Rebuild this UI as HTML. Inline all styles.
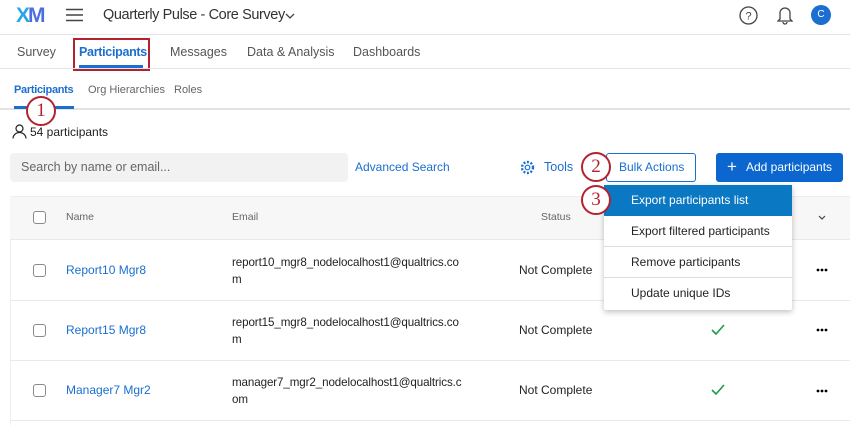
<!DOCTYPE html>
<html><head><meta charset="utf-8"><style>
*{margin:0;padding:0;box-sizing:border-box}
body{width:850px;height:425px;overflow:hidden;background:#fff;font-family:"Liberation Sans",sans-serif;color:#222;position:relative}
.a{position:absolute;white-space:nowrap}
.blue{color:#1a6fd1}
.cb{position:absolute;width:13px;height:13px;border:1.3px solid #8a8a8a;border-radius:3px;background:#fff}
.circ{position:absolute;width:30px;height:30px;border:2.5px solid #b3232f;border-radius:50%;background:#fff;color:#b3232f;font-size:19px;text-align:center;line-height:25px;font-family:"Liberation Serif",serif}
.mi{position:absolute;left:0;width:188px;height:31px;font-size:12px;padding-left:27px;line-height:31px;border-top:1px solid #ddd}
.em{font-size:11.6px;line-height:17px;letter-spacing:-0.1px}
</style></head><body>
<div class="a" style="left:16px;top:4px;font-size:21px;font-weight:bold;letter-spacing:-2px;color:#2aa6e8">X<span style="color:#4c6fe0">M</span></div>
<svg class="a" style="left:66px;top:8px" width="17" height="14"><path d="M0 1.5H17M0 7H17M0 12.5H17" stroke="#444" stroke-width="1.6"/></svg>
<div class="a" style="left:103px;top:7px;font-size:14.5px;color:#333;letter-spacing:-0.4px">Quarterly Pulse - Core Survey</div>
<svg class="a" style="left:285px;top:13px" width="10" height="7"><path d="M1 1L5 5L9 1" stroke="#444" fill="none" stroke-width="1.3"/></svg>
<svg class="a" style="left:739px;top:6px" width="19" height="19"><circle cx="9.5" cy="9.5" r="8.5" stroke="#444" fill="none" stroke-width="1.3"/><text x="9.5" y="13.5" font-size="11" text-anchor="middle" fill="#444" font-family="Liberation Sans">?</text></svg>
<svg class="a" style="left:777px;top:5px" width="16" height="20"><path d="M3 14V8a5 5 0 0110 0v6l2 2H1z M6 17a2 2 0 004 0" stroke="#444" fill="none" stroke-width="1.3"/></svg>
<div class="a" style="left:811px;top:5px;width:20px;height:20px;border-radius:50%;background:#1a6fd1;color:#fff;font-size:10px;text-align:center;line-height:20px">C</div>
<div class="a" style="left:0;top:34px;width:850px;height:1px;background:#e5e5e5"></div>
<div class="a" style="left:17px;top:45px;font-size:12.5px;color:#555">Survey</div>
<div class="a blue" style="left:79px;top:45px;font-size:12.5px;font-weight:bold;letter-spacing:-0.3px">Participants</div>
<div class="a" style="left:79px;top:65px;width:64px;height:3px;background:#1a6fd1"></div>
<div class="a" style="left:73px;top:38px;width:77px;height:33px;border:2px solid #b3232f"></div>
<div class="a" style="left:170px;top:45px;font-size:12.5px;color:#555">Messages</div>
<div class="a" style="left:247px;top:45px;font-size:12.5px;color:#555">Data &amp; Analysis</div>
<div class="a" style="left:353px;top:45px;font-size:12.5px;color:#555">Dashboards</div>
<div class="a" style="left:0;top:68px;width:850px;height:1px;background:#e5e5e5"></div>
<div class="a blue" style="left:14px;top:84px;font-size:11px;font-weight:bold;letter-spacing:-0.3px">Participants</div>
<div class="a" style="left:88px;top:84px;font-size:11px;color:#666">Org Hierarchies</div>
<div class="a" style="left:174px;top:84px;font-size:11px;color:#666">Roles</div>
<div class="a" style="left:0;top:108px;width:850px;height:2px;background:#e3e3e3"></div>
<div class="a" style="left:14px;top:106px;width:60px;height:3px;background:#1a6fd1"></div>
<div class="circ" style="left:26px;top:96px">1</div>
<svg class="a" style="left:12px;top:124px" width="15" height="15"><circle cx="7.5" cy="4.5" r="3.5" stroke="#222" fill="none" stroke-width="1.2"/><path d="M1 14.5a6.5 6 0 0113 0" stroke="#222" fill="none" stroke-width="1.2"/></svg>
<div class="a" style="left:30px;top:125px;font-size:12px">54 participants</div>
<div class="a" style="left:10px;top:153px;width:338px;height:29px;background:#f2f2f2;border-radius:4px"></div>
<div class="a" style="left:21px;top:160px;font-size:12.5px;color:#666">Search by name or email...</div>
<div class="a blue" style="left:355px;top:160px;font-size:12px">Advanced Search</div>
<svg class="a" style="left:520px;top:160px" width="15" height="15"><circle cx="7.5" cy="7.5" r="2.3" stroke="#1a6fd1" fill="none" stroke-width="1.2"/><circle cx="7.5" cy="7.5" r="5.5" stroke="#1a6fd1" fill="none" stroke-width="2.4" stroke-dasharray="2 1.6"/></svg>
<div class="a blue" style="left:544px;top:160px;font-size:12.5px">Tools</div>
<div class="a" style="left:606px;top:153px;width:90px;height:29px;border:1px solid #1a6fd1;border-radius:3px"></div>
<div class="a blue" style="left:619px;top:160px;font-size:12px">Bulk Actions</div>
<div class="a" style="left:716px;top:153px;width:127px;height:29px;background:#0b67cf;border-radius:3px"></div>
<div class="a" style="left:727px;top:157px;font-size:17px;color:#fff">+</div>
<div class="a" style="left:746px;top:160px;font-size:12px;color:#fff">Add participants</div>
<div class="circ" style="left:581px;top:152px">2</div>
<div class="a" style="left:10px;top:196px;width:840px;height:229px;border-left:1px solid #eee"></div>
<div class="a" style="left:10px;top:196px;width:840px;height:44px;background:#f7f7f7;border-top:1px solid #eee;border-bottom:1px solid #e8e8e8"></div>
<div class="cb" style="left:33px;top:211px"></div>
<div class="a" style="left:66px;top:211px;font-size:10.5px;color:#666">Name</div>
<div class="a" style="left:232px;top:211px;font-size:10.5px;color:#666">Email</div>
<div class="a" style="left:541px;top:211px;font-size:10.5px;color:#666">Status</div>
<svg class="a" style="left:818px;top:215px" width="8" height="5"><path d="M1 1L4 4L7 1" stroke="#444" fill="none" stroke-width="1.2"/></svg>
<div class="a" style="left:10px;top:300px;width:840px;height:1px;background:#eaeaea"></div>
<div class="a" style="left:10px;top:360px;width:840px;height:1px;background:#eaeaea"></div>
<div class="a" style="left:10px;top:420px;width:840px;height:1px;background:#eaeaea"></div>

<div class="cb" style="left:33px;top:264px"></div>
<div class="a blue" style="left:66px;top:263px;font-size:12px">Report10 Mgr8</div>
<div class="a em" style="left:232px;top:254px">report10_mgr8_nodelocalhost1@qualtrics.co<br>m</div>
<div class="a" style="left:519px;top:263px;font-size:12px">Not Complete</div>
<svg class="a" style="left:816px;top:268px" width="12" height="4"><circle cx="2" cy="2" r="1.4"/><circle cx="6" cy="2" r="1.4"/><circle cx="10" cy="2" r="1.4"/></svg>

<div class="cb" style="left:33px;top:324px"></div>
<div class="a blue" style="left:66px;top:323px;font-size:12px">Report15 Mgr8</div>
<div class="a em" style="left:232px;top:314px">report15_mgr8_nodelocalhost1@qualtrics.co<br>m</div>
<div class="a" style="left:519px;top:323px;font-size:12px">Not Complete</div>
<svg class="a" style="left:711px;top:324px" width="14" height="11"><path d="M1 6L5 10L13 1" stroke="#1f9a4a" fill="none" stroke-width="1.6"/></svg>
<svg class="a" style="left:816px;top:328px" width="12" height="4"><circle cx="2" cy="2" r="1.4"/><circle cx="6" cy="2" r="1.4"/><circle cx="10" cy="2" r="1.4"/></svg>

<div class="cb" style="left:33px;top:384px"></div>
<div class="a blue" style="left:66px;top:383px;font-size:12px">Manager7 Mgr2</div>
<div class="a em" style="left:232px;top:374px">manager7_mgr2_nodelocalhost1@qualtrics.c<br>om</div>
<div class="a" style="left:519px;top:383px;font-size:12px">Not Complete</div>
<svg class="a" style="left:711px;top:384px" width="14" height="11"><path d="M1 6L5 10L13 1" stroke="#1f9a4a" fill="none" stroke-width="1.6"/></svg>
<svg class="a" style="left:816px;top:389px" width="12" height="4"><circle cx="2" cy="2" r="1.4"/><circle cx="6" cy="2" r="1.4"/><circle cx="10" cy="2" r="1.4"/></svg>

<div class="a" style="left:604px;top:185px;width:188px;height:125px;background:#fff;box-shadow:0 2px 6px rgba(0,0,0,.25);border-radius:2px">
<div class="mi" style="top:0;background:#0a78c2;color:#fff;border:none">Export participants list</div>
<div class="mi" style="top:31px;border:none">Export filtered participants</div>
<div class="mi" style="top:61px">Remove participants</div>
<div class="mi" style="top:92px">Update unique IDs</div>
</div>
<div class="circ" style="left:581px;top:185px">3</div>
</body></html>
